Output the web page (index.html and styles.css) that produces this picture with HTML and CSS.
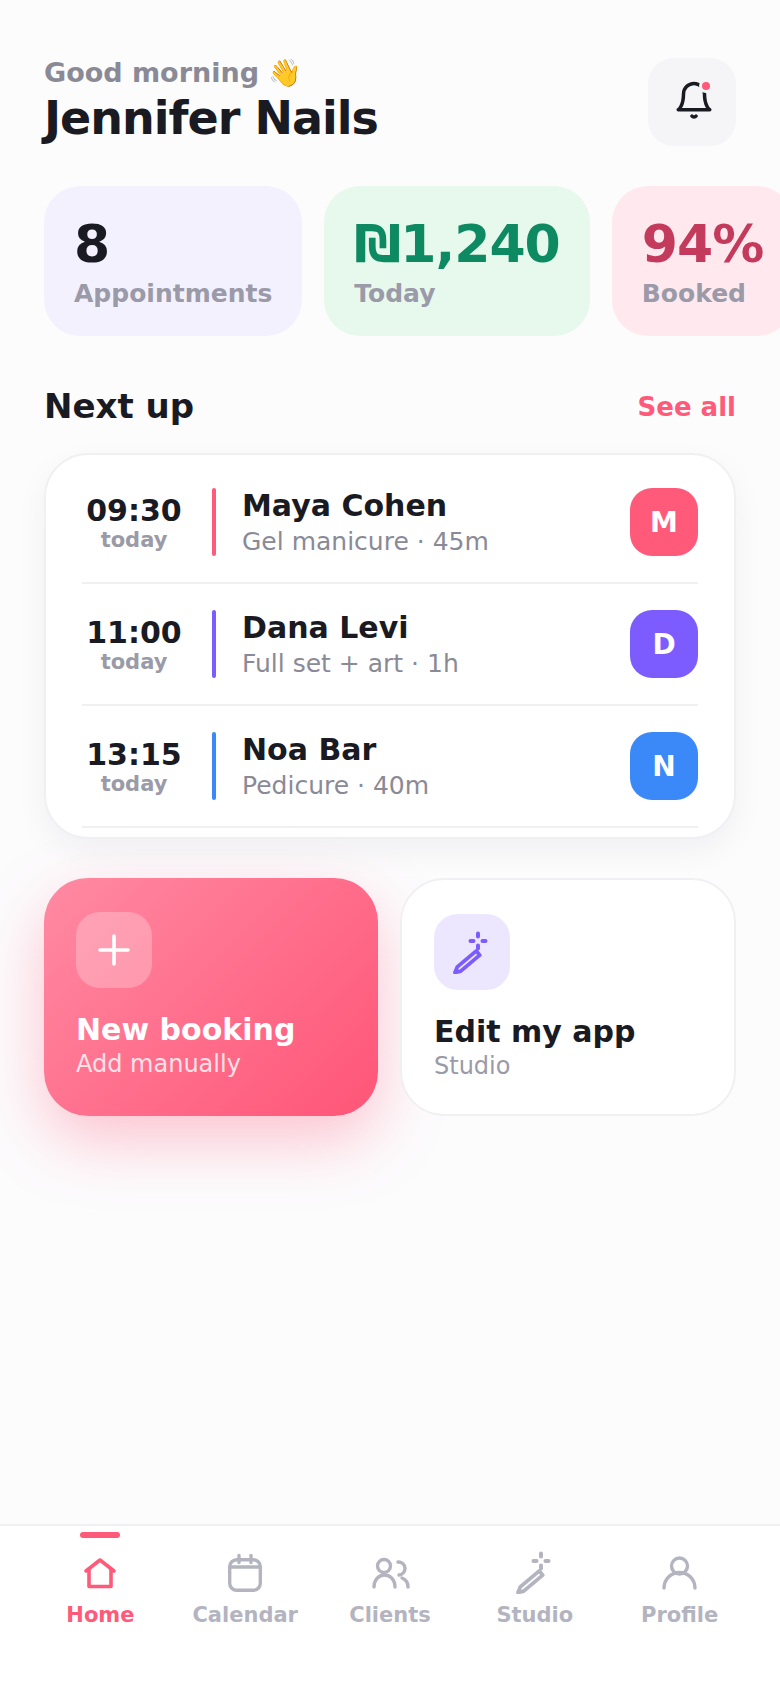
FILE: index.html
```html
<!DOCTYPE html>
<html lang="en">
<head>
    <meta charset="UTF-8">
    <meta name="viewport" content="width=device-width, initial-scale=1.0">
    <link rel="stylesheet" href="styles.css">
    <title>Jennifer Nails</title>
</head>
<body>
    <svg class="defs" width="0" height="0">
        <symbol id="wand" viewBox="0 0 44 44">
            <path d="M28 3.500v3M28 15.500v3M20.500 11h3M32.500 11h3" fill="none" stroke="currentColor" stroke-width="4" stroke-linecap="round"/>
            <path d="M5 42.500l2.300-5.600 19-16 3.400 4.200-19 16z" fill="none" stroke="currentColor" stroke-width="3.800" stroke-linejoin="round"/>
        </symbol>
    </svg>

    <main class="page">
        <header class="top">
            <div>
                <div class="greeting">Good morning 👋</div>
                <h1 class="owner">Jennifer Nails</h1>
            </div>
            <button class="bell">
                <svg width="42" height="42" viewBox="0 0 24 24" fill="none" stroke="#1a1a22" stroke-width="2" stroke-linecap="round" stroke-linejoin="round">
                    <path d="M6 8a6 6 0 0 1 12 0c0 7 3 9 3 9H3s3-2 3-9"/>
                    <path d="M10.800 20.600a1.500 1.500 0 0 0 2.400 0"/>
                </svg>
                <span class="bell-dot"></span>
            </button>
        </header>

        <section class="stats">
            <div class="stat stat-purple">
                <div class="stat-value">8</div>
                <div class="stat-label">Appointments</div>
            </div>
            <div class="stat stat-green">
                <div class="stat-value">₪1,240</div>
                <div class="stat-label">Today</div>
            </div>
            <div class="stat stat-pink">
                <div class="stat-value">94%</div>
                <div class="stat-label">Booked</div>
            </div>
        </section>

        <div class="section-head">
            <h2>Next up</h2>
            <a class="see-all">See all</a>
        </div>

        <section class="list">
            <div class="row">
                <div class="time">09:30<small>today</small></div>
                <div class="bar pink"></div>
                <div class="info">
                    <div class="name">Maya Cohen</div>
                    <div class="service">Gel manicure · 45m</div>
                </div>
                <div class="avatar pink">M</div>
            </div>
            <div class="row">
                <div class="time">11:00<small>today</small></div>
                <div class="bar purple"></div>
                <div class="info">
                    <div class="name">Dana Levi</div>
                    <div class="service">Full set + art · 1h</div>
                </div>
                <div class="avatar purple">D</div>
            </div>
            <div class="row">
                <div class="time">13:15<small>today</small></div>
                <div class="bar blue"></div>
                <div class="info">
                    <div class="name">Noa Bar</div>
                    <div class="service">Pedicure · 40m</div>
                </div>
                <div class="avatar blue">N</div>
            </div>
        </section>

        <section class="actions">
            <div class="action action-new">
                <div class="action-icon">
                    <svg width="44" height="44" viewBox="0 0 44 44" fill="none" stroke="#fff" stroke-width="3.600" stroke-linecap="round">
                        <path d="M22 8v28M8 22h28"/>
                    </svg>
                </div>
                <div class="action-title">New booking</div>
                <div class="action-sub">Add manually</div>
            </div>
            <div class="action action-edit">
                <div class="action-icon">
                    <svg width="44" height="44"><use href="#wand"/></svg>
                </div>
                <div class="action-title">Edit my app</div>
                <div class="action-sub">Studio</div>
            </div>
        </section>
    </main>

    <nav class="tabs">
        <a class="tab active">
            <svg width="44" height="44" viewBox="0 0 44 44" fill="none" stroke="currentColor" stroke-width="3.600" stroke-linecap="round" stroke-linejoin="round">
                <path d="M8 21l14-11 14 11"/>
                <path d="M11 19v17.500h22V19"/>
            </svg>
            Home
        </a>
        <a class="tab">
            <svg width="44" height="44" viewBox="0 0 44 44" fill="none" stroke="currentColor" stroke-width="3.400" stroke-linecap="round" stroke-linejoin="round">
                <rect x="6.700" y="9.700" width="30.600" height="30.600" rx="7"/>
                <path d="M6.700 17h30.600M16 5.500v7M28 5.500v7"/>
            </svg>
            Calendar
        </a>
        <a class="tab">
            <svg width="44" height="44" viewBox="0 0 44 44" fill="none" stroke="currentColor" stroke-width="3.400" stroke-linecap="round" stroke-linejoin="round">
                <circle cx="16" cy="16" r="6.500"/>
                <path d="M6 37c0-7 4.500-12 10.500-12S27 30 27 37"/>
                <path d="M30 12a6.500 6.500 0 0 1 1 13"/>
                <path d="M34 28c3.500 1.500 6 5 6 9"/>
            </svg>
            Clients
        </a>
        <a class="tab">
            <svg width="44" height="44"><use href="#wand"/></svg>
            Studio
        </a>
        <a class="tab">
            <svg width="44" height="44" viewBox="0 0 44 44" fill="none" stroke="currentColor" stroke-width="3.400" stroke-linecap="round" stroke-linejoin="round">
                <circle cx="21.500" cy="16" r="8"/>
                <path d="M6 38a15.500 15.500 0 0 1 31 0"/>
            </svg>
            Profile
        </a>
    </nav>
</body>
</html>
```

FILE: styles.css
```css
* {
    box-sizing: border-box;
}

body {
    display: flex;
    flex-direction: column;
    height: 1688px;
    margin: 0;
    overflow: hidden;
    background-color: #fcfcfd;
    color: #1a1a22;
    font-family: "DejaVu Sans", sans-serif;
}

.defs {
    position: absolute;
}

.page {
    flex: 1;
    padding: 58px 44px 0;
}

.top {
    display: flex;
    justify-content: space-between;
}

.greeting {
    font-size: 27px;
    font-weight: 700;
    line-height: 30px;
    color: #8a8a96;
}

.owner {
    margin: 2px 0 0;
    font-size: 46px;
    font-weight: 700;
    line-height: 56px;
    letter-spacing: -1px;
}

.bell {
    position: relative;
    display: flex;
    align-items: center;
    justify-content: center;
    width: 88px;
    height: 88px;
    padding: 0 0 2px 3px;
    border: none;
    border-radius: 26px;
    background-color: #f5f5f7;
}

.bell-dot {
    position: absolute;
    top: 21px;
    right: 23px;
    width: 14px;
    height: 14px;
    border: 3px solid #f5f5f7;
    border-radius: 50%;
    background-color: #ff5a7a;
}

.stats {
    display: flex;
    gap: 22px;
    margin-top: 40px;
    margin-right: -44px;
}

.stat {
    flex: none;
    height: 150px;
    padding: 29px 30px;
    border-radius: 36px;
}

.stat-purple {
    background-color: #f4f1ff;
}

.stat-green {
    background-color: #e7f8ed;
    color: #0e8a62;
}

.stat-pink {
    background-color: #ffe9ee;
    color: #c43a5c;
}

.stat-value {
    font-size: 52px;
    font-weight: 700;
    line-height: 58px;
    letter-spacing: -1px;
}

.stat-label {
    margin-top: 5px;
    font-size: 25px;
    font-weight: 700;
    line-height: 32px;
    color: #9a9aa8;
}

.section-head {
    display: flex;
    align-items: center;
    justify-content: space-between;
    margin-top: 50px;
    height: 40px;
}

.section-head h2 {
    margin: 0;
    font-size: 34px;
    font-weight: 700;
}

.see-all {
    padding-top: 2px;
    font-size: 26px;
    font-weight: 700;
    color: #ff5a7a;
}

.list {
    margin-top: 27px;
    padding: 7px 36px 9px;
    border: 2px solid #f0f0f3;
    border-radius: 44px;
    background-color: #fff;
    box-shadow: 0 12px 32px rgba(26, 26, 34, 0.05);
}

.row {
    display: flex;
    align-items: center;
    padding: 26px 0;
    border-bottom: 2px solid #f0f0f3;
}

.time {
    width: 104px;
    font-size: 30px;
    font-weight: 700;
    line-height: 36px;
    text-align: center;
}

.time small {
    display: block;
    margin-top: -1px;
    font-size: 21px;
    line-height: 24px;
    color: #9a9aa8;
}

.bar {
    width: 4px;
    height: 68px;
    margin: 0 26px;
    border-radius: 2px;
}

.info {
    flex: 1;
    margin-bottom: -2px;
}

.name {
    font-size: 30px;
    font-weight: 700;
    line-height: 36px;
}

.service {
    margin-top: 2px;
    font-size: 25px;
    line-height: 32px;
    color: #8a8a96;
}

.avatar {
    display: flex;
    align-items: center;
    justify-content: center;
    width: 68px;
    height: 68px;
    border-radius: 22px;
    font-size: 28px;
    font-weight: 700;
    color: #fff;
}

.pink {
    background-color: #ff5a7a;
}

.purple {
    background-color: #7c5cff;
}

.blue {
    background-color: #3b88f8;
}

.actions {
    display: flex;
    gap: 22px;
    margin-top: 39px;
}

.action {
    height: 238px;
    padding: 34px 32px;
    border-radius: 44px;
}

.action-new {
    flex: none;
    width: 334px;
    background: linear-gradient(135deg, #ff8aa3, #ff5577);
    color: #fff;
    box-shadow: 0 24px 64px rgba(255, 90, 122, 0.35);
}

.action-edit {
    flex: 1;
    border: 2px solid #f0f0f3;
    background-color: #fff;
}

.action-icon {
    display: flex;
    align-items: center;
    justify-content: center;
    width: 76px;
    height: 76px;
    border-radius: 24px;
    background-color: rgba(255, 255, 255, 0.25);
}

.action-edit .action-icon {
    background-color: #ece6ff;
    color: #7c5cff;
}

.action-title {
    margin-top: 23px;
    font-size: 30px;
    font-weight: 700;
    line-height: 38px;
}

.action-sub {
    font-size: 24px;
    line-height: 30px;
    opacity: 0.8;
}

.action-edit .action-sub {
    color: #9a9aa8;
    opacity: 1;
}

.tabs {
    display: flex;
    height: 164px;
    padding: 0 28px;
    border-top: 2px solid #f0f0f3;
    background-color: #fff;
}

.tab {
    position: relative;
    display: flex;
    flex: 1;
    flex-direction: column;
    align-items: center;
    gap: 9px;
    padding-top: 24px;
    font-size: 21px;
    font-weight: 700;
    color: #b4b4c0;
}

.tab.active {
    color: #ff5a7a;
}

.tab.active::before {
    content: "";
    position: absolute;
    top: 6px;
    width: 40px;
    height: 6px;
    border-radius: 3px;
    background-color: #ff5a7a;
}
```
